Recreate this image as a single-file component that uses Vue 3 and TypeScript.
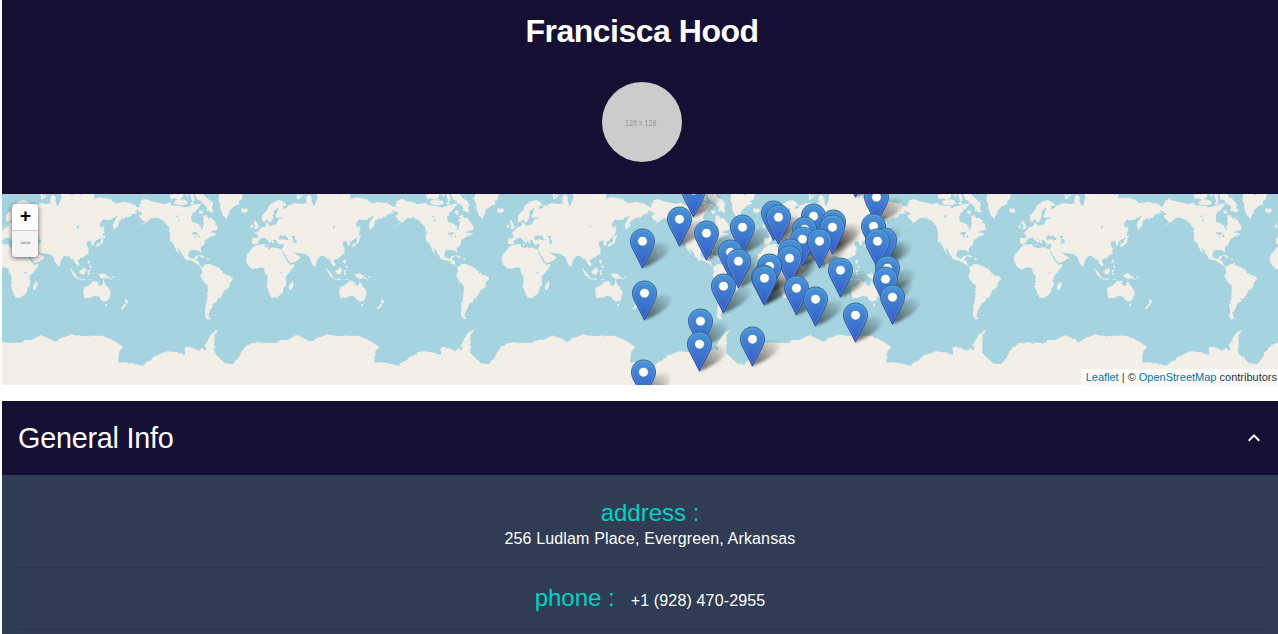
<script setup lang="ts">
import { ref } from 'vue'

interface Pin {
  x: number
  y: number
}

const person = {
  name: 'Francisca Hood',
  address: '256 Ludlam Place, Evergreen, Arkansas',
  phone: '+1 (928) 470-2955',
}

const expanded = ref(true)

// Horizontal offsets of the repeated 256px world tiles.
const tiles: number[] = [-126, 130, 386, 642, 898, 1154]

// Centre of each pin's white dot; pins further south are painted last.
const coords: [number, number][] = [
  [642.5, 241], [644.5, 293], [643.5, 372], [693.5, 190], [679.5, 219], [706.5, 233],
  [742.5, 227], [730.5, 252], [738.5, 261], [723.5, 286], [700.5, 321], [699.5, 344],
  [752.5, 339], [773.5, 213], [778.5, 217], [813.5, 216], [804.5, 229], [802.5, 239],
  [833.5, 222], [832.5, 227], [819.5, 241], [790.5, 251], [789.5, 258], [769.5, 266],
  [763.5, 277], [764.5, 278], [796.5, 288], [815.5, 299], [840.5, 270], [855.5, 315],
  [855.5, 170], [876.5, 197], [873.5, 226], [884.5, 240], [877.5, 241], [887.5, 268],
  [885.5, 279], [892.5, 297],
]
const pins: Pin[] = coords.map(([x, y]) => ({ x, y })).sort((a, b) => a.y - b.y)
</script>

<template>
  <main class="page">
    <header class="hero">
      <h1>{{ person.name }}</h1>
      <div class="avatar"><span>128 x 128</span></div>
    </header>

    <section class="map">
      <svg class="canvas" width="1280" height="191" viewBox="2 194 1280 191">
        <defs>
          <linearGradient id="pinFill" x1="0" y1="0" x2="0" y2="1">
            <stop offset="0" stop-color="#4a95d6" />
            <stop offset="1" stop-color="#3359c8" />
          </linearGradient>
          <linearGradient id="pinEdge" x1="0" y1="0" x2="0" y2="1">
            <stop offset="0" stop-color="#2e6c97" />
            <stop offset="1" stop-color="#3051a5" />
          </linearGradient>
          <linearGradient id="shade" x1="0" y1="1" x2="1" y2="0">
            <stop offset="0" stop-color="#000" stop-opacity=".6" />
            <stop offset=".5" stop-color="#000" stop-opacity=".3" />
            <stop offset="1" stop-color="#000" stop-opacity="0" />
          </linearGradient>
          <filter id="soft" x="-40%" y="-40%" width="180%" height="180%">
            <feGaussianBlur stdDeviation="1.7" />
          </filter>
          <filter id="coast" x="0" y="0" width="100%" height="100%" color-interpolation-filters="sRGB">
            <feTurbulence type="fractalNoise" baseFrequency=".35" numOctaves="2" seed="4" />
            <feDisplacementMap in="SourceGraphic" scale="2.4" xChannelSelector="R" yChannelSelector="G" />
          </filter>
          <g id="world" transform="scale(.33333)">
            <g fill="#f2efe9">
              <!-- North America -->
              <path d="M28,45 L35,30 48,27 60,33 80,37 100,42 118,38 125,46 150,47 165,52 185,47 200,42 215,40 210,48 200,60 188,70 183,82 187,95 200,100 210,108 216,122 219,108 222,100 219,90 222,84 218,78 228,75 236,86 244,82 250,92 260,105 264,116 258,121 246,123 240,128 252,128 262,133 246,138 235,144 228,150 222,165 212,175 213,190 208,184 200,180 185,180 177,185 175,198 180,205 192,206 197,198 205,198 198,210 207,215 208,226 218,230 212,230 200,222 185,212 165,208 158,196 150,182 141,170 146,186 150,195 140,184 132,166 128,158 120,152 119,125 118,115 108,100 97,90 80,83 65,84 50,96 30,109 18,114 36,104 46,95 38,90 32,85 28,78 38,72 30,65Z" />
              <!-- Arctic islands -->
              <path d="M118,16 L130,12 160,12 158,22 146,30 134,25 124,28Z M135,32 L150,28 168,30 174,40 162,46 142,44 132,40Z M166,12 L176,12 174,22Z M180,12 L190,12 194,32 187,36Z M180,38 L190,36 194,43 184,45Z M196,12 L218,12 230,24 244,34 250,46 246,54 252,64 243,68 236,62 228,64 232,54 226,46 218,40 206,30 198,26Z M206,64 L216,60 220,70 210,72Z M0,40 L12,44 20,56 14,65 0,58Z" />
              <path d="M268,12 L265,30 270,40 272,60 280,78 289,86 295,74 300,60 315,48 328,42 326,34 334,30 338,20 337,12Z M333,60 L336,55 352,56 354,62 346,69 336,67Z" />
              <path d="M201,196 L215,195 226,203 220,204 210,199Z M228,204 L240,206 236,209 228,208Z" />
              <!-- South America -->
              <path d="M212,230 L218,231 225,223 240,222 248,226 262,232 275,240 280,250 290,254 307,260 309,268 299,280 298,293 285,300 280,308 273,322 262,326 262,333 254,338 248,341 248,349 243,356 240,363 236,372 236,380 243,386 232,388 225,379 226,350 232,320 234,287 220,275 211,257 217,245Z M254,374 L261,374 258,377Z" />
              <!-- Africa and Madagascar -->
              <path d="M378,165 L395,163 404,162 405,170 420,175 432,172 455,178 458,190 465,203 475,218 480,225 493,221 490,232 478,247 467,260 467,275 468,288 460,293 460,305 450,315 440,323 425,324 418,310 411,290 413,272 412,258 403,246 404,235 390,232 375,237 365,236 353,225 348,212 349,195 362,180 370,170Z M489,273 L491,285 484,300 477,299 478,285Z" />
              <!-- Europe and Asia -->
              <path d="M366,160 L366,143 382,144 384,136 376,128 386,122 392,114 400,110 408,105 408,94 414,100 422,107 440,102 440,96 446,88 458,85 452,82 440,84 436,78 442,65 446,55 440,55 431,65 431,76 426,92 418,98 412,88 402,97 395,90 397,75 410,62 418,46 435,34 450,30 465,38 471,47 458,48 460,58 470,54 474,46 482,45 500,38 515,42 530,40 529,22 536,14 545,20 545,35 552,50 556,38 563,25 560,12 660,12 661,26 680,22 710,28 725,40 750,35 775,42 800,55 806,66 796,65 785,60 790,70 775,72 765,82 750,84 735,92 732,108 720,120 716,105 722,92 733,75 725,80 715,85 710,90 685,89 676,107 688,114 688,130 680,145 668,150 660,158 660,167 653,165 650,153 640,154 638,165 644,175 642,190 630,200 615,208 610,212 617,222 614,230 605,222 600,210 590,206 582,198 572,198 560,212 557,230 550,228 543,215 538,200 525,192 505,190 492,187 483,178 494,190 512,203 498,214 481,220 470,205 460,190 456,178 462,163 445,162 438,150 432,149 432,160 426,158 424,150 414,142 424,153 420,160 412,150 405,143 392,145 380,162 372,163Z" />
              <path d="M375,90 L382,100 387,115 372,119 377,108 370,100Z M362,105 L370,104 369,114 362,115Z M498,26 L512,14 520,15 506,28Z M500,12 L508,12 502,24Z M408,162 L416,163 414,167Z M440,167 L451,166 450,168Z" />
              <path d="M685,105 L691,113 690,131Z M684,136 L694,138 690,144 686,160 675,167 664,171 668,163 680,156Z M640,190 L644,187 642,196Z" />
              <!-- South-east Asia and Oceania -->
              <path d="M587,233 L598,243 610,260 607,264 598,255Z M617,242 L625,238 632,232 636,242 630,254 616,250Z M608,264 L634,267 632,270 609,267Z M641,240 L652,240 645,244 649,255 642,254Z M668,249 L676,253 690,250 704,260 716,269 699,265 690,268 680,260Z M641,210 L647,211 647,222 641,219Z M647,225 L654,229 652,235 646,231Z M638,270 L656,267 653,270Z M714,258 L724,260 717,263Z" />
              <path d="M628,293 L645,286 655,275 665,273 674,277 672,284 684,288 688,270 694,282 706,297 711,308 703,331 690,335 680,328 675,320 663,317 647,324 632,325 628,310Z M693,342 L701,343 698,349 694,347Z M755,326 L764,335 759,342 753,337Z M752,341 L757,345 746,357 739,357Z" />
              <!-- Antarctica -->
              <path d="M-2,518 L18,522 37,527 50,515 60,512 72,500 90,492 110,484 140,486 154,492 166,494 163,474 170,470 190,474 206,483 217,474 226,482 230,470 222,470 230,456 242,435 250,426 266,420 254,435 253,490 265,500 285,520 308,522 328,500 333,487 345,470 365,460 382,457 410,458 440,459 450,450 474,449 499,435 520,443 545,456 560,443 575,440 590,433 620,438 650,437 685,437 710,447 748,470 736,484 732,518 750,516 770,520 770,590 -2,590Z" />
            </g>
            <g fill="#a5d3df">
              <path d="M444,149 L448,138 455,135 460,140 466,136 476,147 472,151 460,148Z M485,137 L496,138 494,146 500,150 499,160 491,160 489,148Z M186,128 L196,125 205,130 201,134 188,133Z M196,137 L200,137 197,147Z M204,136 L212,138 207,144Z M135,80 L151,74 142,81Z M140,92 L154,88 145,95Z M607,113 L616,103 612,114Z M451,246 L457,245 456,251 451,250Z" />
              <path d="M457,181 L478,218 473,217Z" />
            </g>
          </g>
          <g id="pin">
            <path
              d="M0,-12 C-7,-12 -12,-6.6 -12,.2 C-12,4.2 -10.3,7.2 -8.7,10.2 L0,27.2 L8.7,10.2 C10.3,7.2 12,4.2 12,.2 C12,-6.6 7,-12 0,-12Z"
              fill="url(#pinFill)" stroke="url(#pinEdge)" stroke-width="1" />
            <path
              d="M0,-10.9 C-6.4,-10.9 -10.9,-6 -10.9,.2 C-10.9,3.9 -9.3,6.7 -7.7,9.7 L0,24.8 L7.7,9.7 C9.3,6.7 10.9,3.9 10.9,.2 C10.9,-6 6.4,-10.9 0,-10.9Z"
              fill="none" stroke="#fff" stroke-opacity=".12" />
            <circle cy=".2" r="4.8" fill="#fff" stroke="#2e6fad" stroke-opacity=".65" stroke-width=".8" />
          </g>
          <path id="shadow" d="M0,27 L5,12 C9,2 24,-2 27,4 C29,12 14,22 0,27Z" fill="url(#shade)" filter="url(#soft)" />
        </defs>
        <rect x="2" y="194" width="1280" height="191" fill="#a5d3df" />
        <g filter="url(#coast)">
          <use v-for="left in tiles" :key="left" href="#world" :x="left" y="190" />
        </g>
        <use v-for="(pin, i) in pins" :key="'s' + i" href="#shadow" :x="pin.x" :y="pin.y" />
        <use v-for="(pin, i) in pins" :key="'p' + i" href="#pin" :x="pin.x" :y="pin.y" />
      </svg>
      <div class="zoom">
        <button type="button" aria-label="Zoom in">+</button>
        <button type="button" aria-label="Zoom out" disabled>−</button>
      </div>
      <div class="attribution"><a>Leaflet</a> | © <a>OpenStreetMap</a> contributors</div>
    </section>

    <section class="panel">
      <button class="panel-head" type="button" @click="expanded = !expanded">
        <span>General Info</span>
        <svg width="24" height="24" viewBox="0 0 24 24" :class="{ closed: !expanded }">
          <path d="M12 8l-6 6 1.41 1.41L12 10.83l4.59 4.58L18 14z" fill="#fff" />
        </svg>
      </button>
      <div v-if="expanded" class="panel-body">
        <div class="row stacked">
          <span class="label">address :</span>
          <span class="value">{{ person.address }}</span>
        </div>
        <hr />
        <div class="row inline">
          <span class="label">phone :</span>
          <span class="value">{{ person.phone }}</span>
        </div>
        <hr />
      </div>
    </section>
  </main>
</template>

<style>
body {
  background: #fff;
  overflow: hidden;
}
</style>

<style scoped>
.page {
  width: 1280px;
  height: 634px;
  margin-left: 2px;
  overflow: hidden;
  font-family: "Liberation Sans", Arial, sans-serif;
}

.hero {
  height: 194px;
  background: #140f33;
  display: flex;
  flex-direction: column;
  align-items: center;
}

.hero h1 {
  margin: 12px 0 32px;
  font-size: 32px;
  line-height: 38px;
  letter-spacing: -0.5px;
  color: #fff;
}

.avatar {
  width: 80px;
  height: 80px;
  border-radius: 50%;
  background: #ccc;
  display: flex;
  align-items: center;
  justify-content: center;
}

.avatar span {
  font-size: 9px;
  line-height: 10px;
  color: #999;
  margin: 2px 2px 0 0;
  transform: scaleX(0.8);
}

.map {
  position: relative;
  height: 191px;
  overflow: hidden;
}

.canvas {
  display: block;
}

.zoom {
  position: absolute;
  top: 10px;
  left: 10px;
  width: 26px;
  border-radius: 4px;
  box-shadow: 0 1px 5px rgba(0, 0, 0, 0.65);
}

.zoom button {
  display: block;
  width: 26px;
  height: 26px;
  padding: 1px 0 0 1px;
  border: 0;
  background: #fff;
  color: #000;
  font: bold 19px/25px "Liberation Mono", monospace;
  border-radius: 0 0 4px 4px;
}

.zoom button:first-child {
  height: 27px;
  border-bottom: 1px solid #ccc;
  border-radius: 4px 4px 0 0;
}

.zoom button:disabled {
  background: #f4f4f4;
  color: #bbb;
}

.attribution {
  position: absolute;
  right: 0;
  bottom: 0;
  padding: 0 5px;
  background: rgba(255, 255, 255, 0.7);
  color: #333;
  font-size: 11px;
  line-height: 16px;
}

.attribution a {
  color: #0078a8;
}

.panel {
  margin-top: 16px;
}

.panel-head {
  width: 100%;
  height: 74px;
  padding: 0 16px;
  border: 0;
  background: #140f33;
  display: flex;
  align-items: center;
  justify-content: space-between;
  color: #fff;
  font: 28.8px/36px "Liberation Sans", Arial, sans-serif;
  letter-spacing: -0.24px;
}

.closed {
  transform: rotate(180deg);
}

.panel-body {
  height: 159px;
  padding: 0 16px;
  background: #303b54;
}

.row {
  display: flex;
  padding-left: 16px;
  color: #fff;
}

.stacked {
  height: 68px;
  padding-top: 24px;
  flex-direction: column;
  align-items: center;
}

.inline {
  height: 61px;
  align-items: baseline;
  justify-content: center;
  gap: 16px;
  line-height: 59px;
}

.label {
  font-size: 24px;
  color: #00d4c0;
}

.stacked .label {
  line-height: 28px;
}

.value {
  font-size: 16px;
  letter-spacing: 0.15px;
}

.stacked .value {
  line-height: 24px;
}

hr {
  height: 1px;
  margin: 0;
  border: 0;
  background: #29334d;
}
</style>
